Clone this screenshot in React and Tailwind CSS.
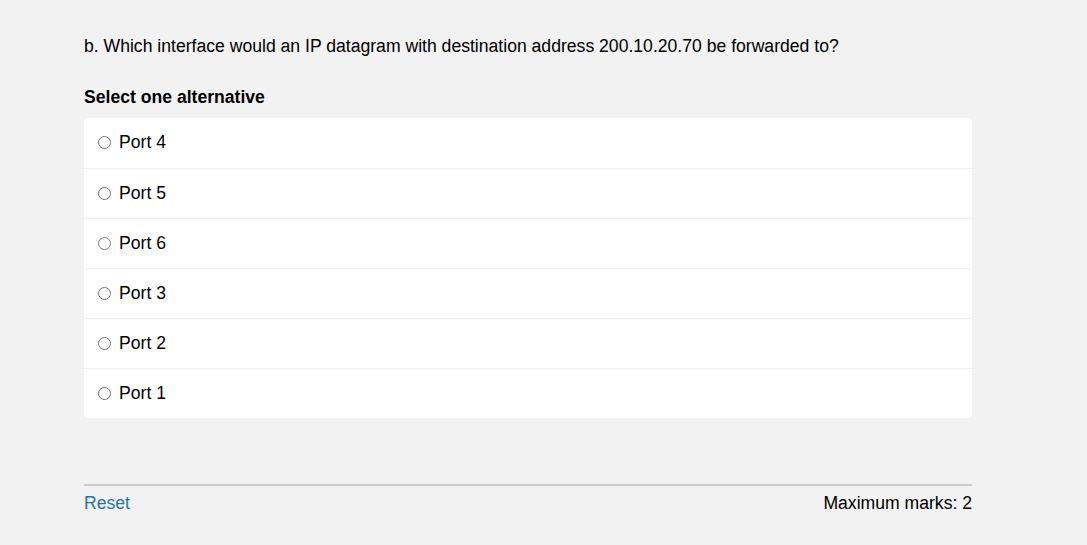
import React, { useState } from 'react'

const options = ['Port 4', 'Port 5', 'Port 6', 'Port 3', 'Port 2', 'Port 1']

export default function App() {
  const [selected, setSelected] = useState(null)

  return (
    <div className="min-h-[545px] bg-[#f2f2f2] text-black" style={{ fontFamily: '"Liberation Sans", Arial, sans-serif' }}>
      <div className="ml-[84px] w-[888px] pt-[34px]">
        <p className="text-[17.6px] leading-6">
          b. Which interface would an IP datagram with destination address 200.10.20.70 be forwarded to?
        </p>

        <h3 className="mt-[27px] text-[17.6px] leading-6 font-bold">Select one alternative</h3>

        <div className="mt-[9px] rounded bg-white">
          {options.map((opt, i) => (
            <label
              key={opt}
              className={
                'flex h-[50px] cursor-pointer items-center pl-[14px] pb-[1px] text-[17.6px] ' +
                (i > 0 ? 'border-t border-[#f0f0f0]' : '')
              }
            >
              <input
                type="radio"
                name="alt"
                className="m-0 h-[13px] w-[13px]"
                checked={selected === opt}
                onChange={() => setSelected(opt)}
              />
              <span className="ml-[8px]">{opt}</span>
            </label>
          ))}
        </div>

        <div className="mt-[66px] border-t-2 border-[#cccccc]" />
        <div className="flex items-center justify-between pt-[5px] text-[17.6px] leading-6">
          <button className="text-[#2d70a3]" onClick={() => setSelected(null)}>
            Reset
          </button>
          <span>Maximum marks: 2</span>
        </div>
      </div>
    </div>
  )
}
